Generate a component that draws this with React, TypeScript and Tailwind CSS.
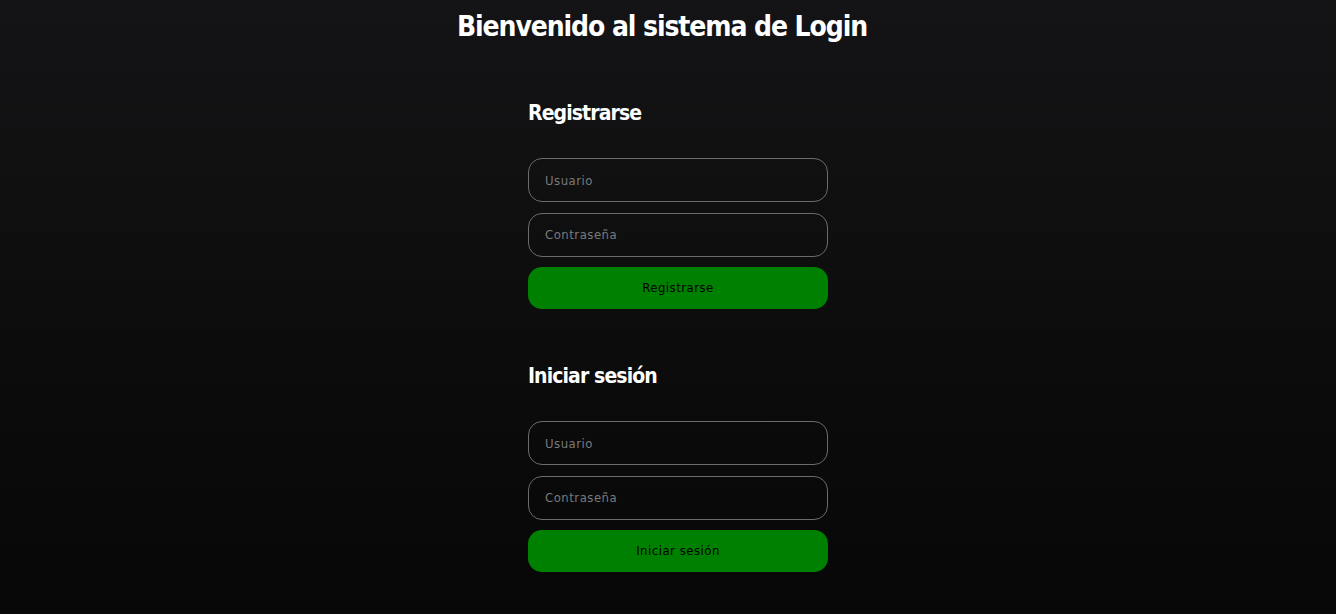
import { useState } from "react";

const font = { fontFamily: '"DejaVu Sans Condensed", "DejaVu Sans", sans-serif' };

type FormProps = {
  title: string;
  action: string;
};

const AuthForm = ({ title, action }: FormProps) => {
  const [user, setUser] = useState("");
  const [pass, setPass] = useState("");

  return (
    <div className="flex flex-col w-[300px]">
      <h2 className="text-[21px] font-bold text-white leading-[30px] tracking-[-0.9px]">{title}</h2>
      <div className="flex flex-col gap-[10.5px] mt-[30px]">
        <input
          value={user}
          onChange={(e) => setUser(e.target.value)}
          placeholder="Usuario"
          className="h-[44px] w-full rounded-[14px] border border-[#6b6b6b] bg-transparent px-4 text-[13px] tracking-[0.5px] text-white placeholder:text-[#7a7a7a] outline-none"
        />
        <input
          type="password"
          value={pass}
          onChange={(e) => setPass(e.target.value)}
          placeholder="Contraseña"
          className="h-[44px] w-full rounded-[14px] border border-[#6b6b6b] bg-transparent px-4 text-[13px] tracking-[0.5px] text-white placeholder:text-[#7a7a7a] outline-none"
        />
        <button className="h-[42px] w-full rounded-[14px] bg-[#008000] text-[13px] tracking-[0.5px] text-black">
          {action}
        </button>
      </div>
    </div>
  );
};

const App = () => {
  return (
    <div
      style={font}
      className="min-h-[614px] w-full bg-gradient-to-b from-[#141416] to-[#070707] flex flex-col items-center"
    >
      {/* titulo */}
      <h1 className="mt-[7px] text-[28px] font-bold leading-[40px] text-white tracking-[-1.1px] -translate-x-[6px]">
        Bienvenido al sistema de Login
      </h1>
      {/* formularios */}
      <div className="flex flex-col gap-[52px] mt-[51px] translate-x-[10px]">
        <AuthForm title="Registrarse" action="Registrarse" />
        <AuthForm title="Iniciar sesión" action="Iniciar sesión" />
      </div>
    </div>
  );
};

export default App;
